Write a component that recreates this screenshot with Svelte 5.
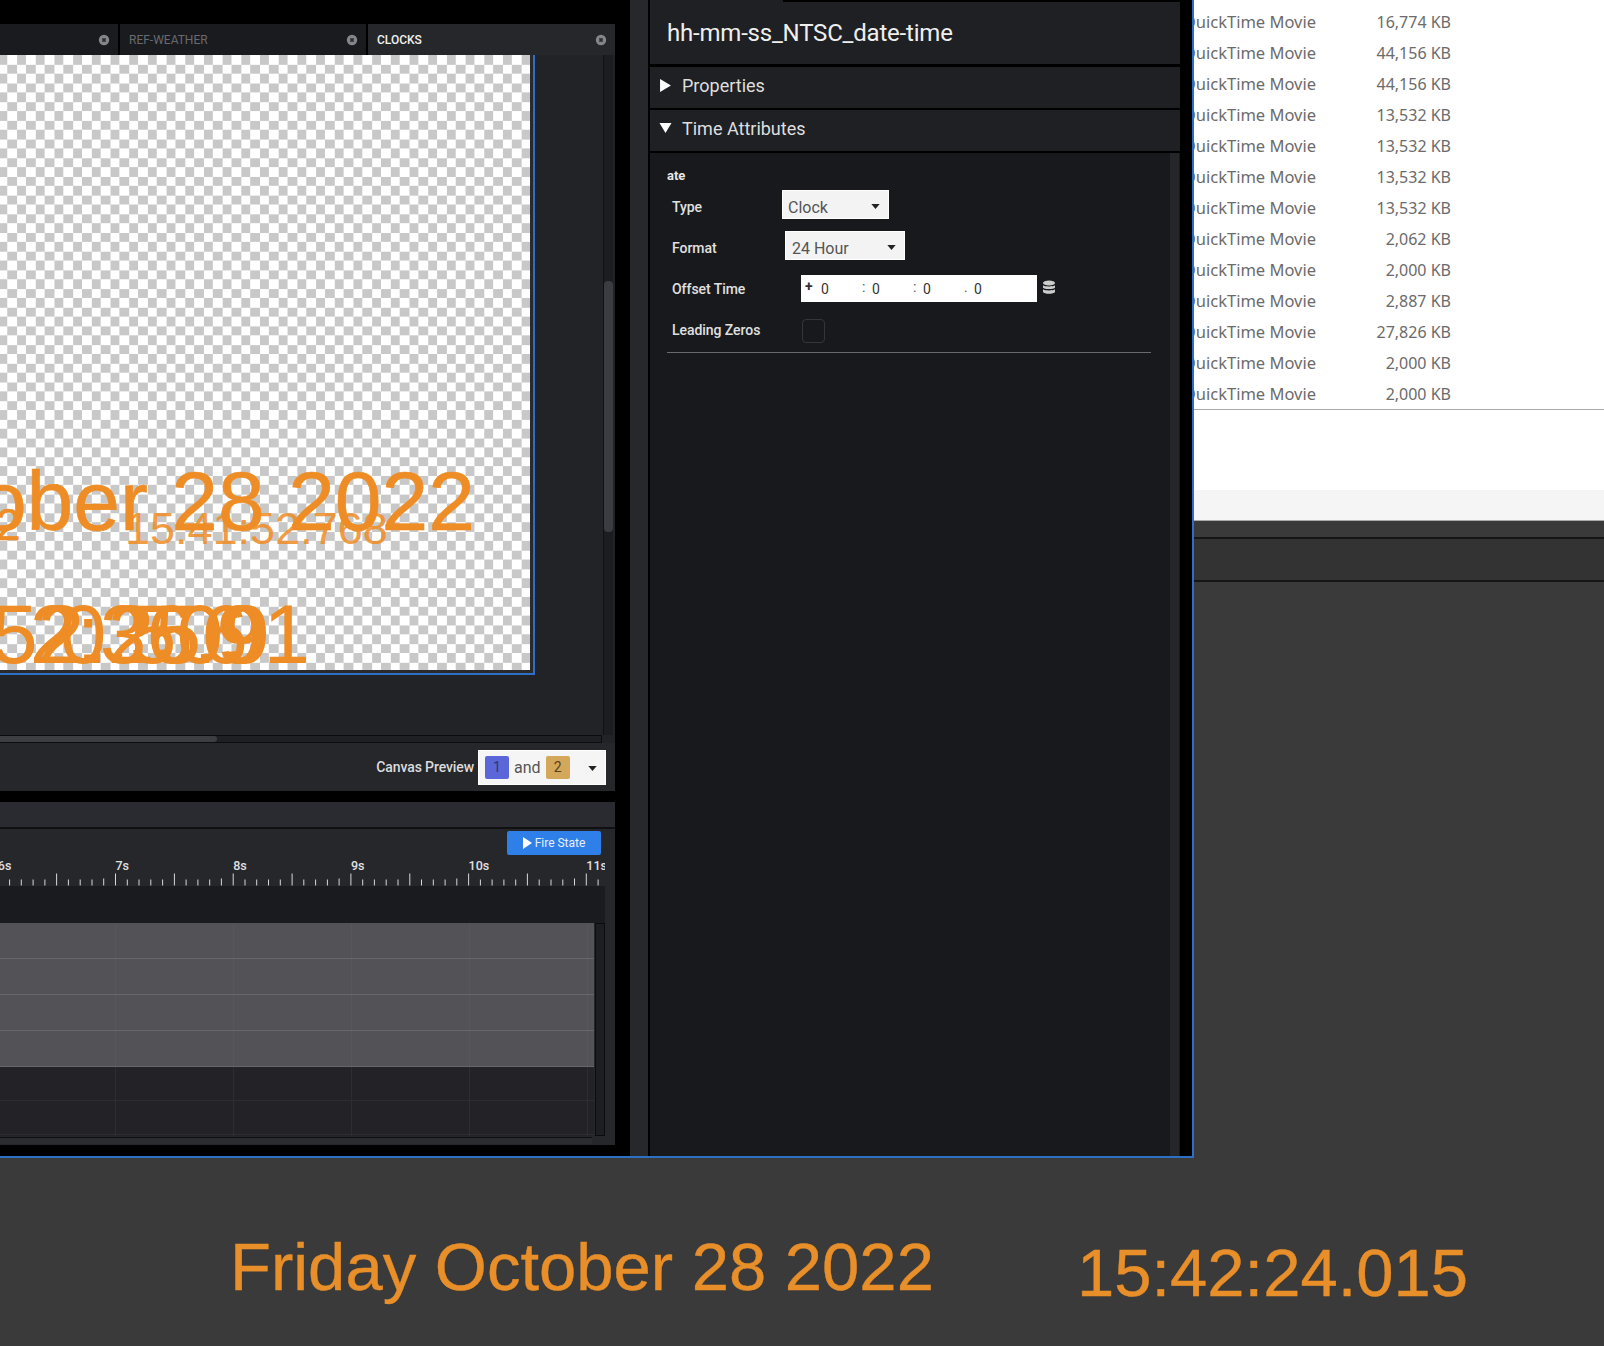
<script>
	const files = [
		'16,774 KB', '44,156 KB', '44,156 KB', '13,532 KB', '13,532 KB', '13,532 KB', '13,532 KB',
		'2,062 KB', '2,000 KB', '2,887 KB', '27,826 KB', '2,000 KB', '2,000 KB'
	];

	const secondWidth = 117.7;
	const ticks = [];
	for (let i = 0; i <= 52; i++) {
		const x = -2.2 + (i * secondWidth) / 10;
		let h = 6;
		if (i % 10 === 0 || i % 5 === 0) h = 12;
		else if (i % 10 === 9) h = 7;
		ticks.push({ x: x.toFixed(1), h });
	}
	const seconds = [6, 7, 8, 9, 10, 11];
</script>

<div class="screen">
	<div class="top">
		<div class="app">
			<div class="left">
				<div class="tabs">
					<div class="tab first">
						<svg class="close" viewBox="0 0 12 12"><circle cx="6" cy="6" r="5.2" fill="#85868a" /><path d="M4.4 4.4l3.2 3.2M7.6 4.4l-3.2 3.2" stroke="#2a2b2e" stroke-width="1.6" /></svg>
					</div>
					<div class="tab second">
						<span>REF-WEATHER</span>
						<svg class="close" viewBox="0 0 12 12"><circle cx="6" cy="6" r="5.2" fill="#85868a" /><path d="M4.4 4.4l3.2 3.2M7.6 4.4l-3.2 3.2" stroke="#2a2b2e" stroke-width="1.6" /></svg>
					</div>
					<div class="tab active">
						<span>CLOCKS</span>
						<svg class="close" viewBox="0 0 12 12"><circle cx="6" cy="6" r="5.2" fill="#85868a" /><path d="M4.4 4.4l3.2 3.2M7.6 4.4l-3.2 3.2" stroke="#2a2b2e" stroke-width="1.6" /></svg>
					</div>
				</div>

				<div class="viewer">
					<div class="viewport">
						<div class="stage">
							<div class="canvas">
								<span class="clip date">Friday October 28 2022</span>
								<span class="clip stray">2</span>
								<span class="clip small">15:41:52.768</span>
								<span class="clip big a">2:36.91</span>
								<span class="clip big b">52.256</span>
								<span class="clip big c">0.509</span>
							</div>
						</div>
						<div class="vscroll"><div class="vthumb"></div></div>
					</div>
					<div class="hscroll"><div class="hthumb"></div></div>
					<div class="preview">
						<span class="preview-label">Canvas Preview</span>
						<div class="preview-select">
							<span class="badge one">1</span>
							<span>and</span>
							<span class="badge two">2</span>
							<svg class="caret" viewBox="0 0 10 6"><path d="M0 0h10L5 6z" fill="#222" /></svg>
						</div>
					</div>
				</div>

				<div class="timeline">
					<div class="tl-head"></div>
					<div class="tl-tools">
						<button class="fire">
							<svg viewBox="0 0 9 12"><path d="M0 0l9 6-9 6z" fill="#fff" /></svg>
							Fire State
						</button>
					</div>
					<svg class="ruler" viewBox="0 0 605 28">
						{#each ticks as t}
							<line x1={t.x} x2={t.x} y1={27.5 - t.h} y2="27.5" stroke="#d8d8d8" stroke-width="1" />
						{/each}
						{#each seconds as s, i}
							<text x={-2.2 + i * secondWidth} y="12">{s}s</text>
						{/each}
					</svg>
					<div class="tl-gap"></div>
					<div class="tl-body">
						<div class="tracks">
							<div class="track"></div>
							<div class="track"></div>
							<div class="track"></div>
							<div class="track"></div>
							<div class="row"></div>
							<div class="row"></div>
						</div>
						<div class="tl-vscroll"></div>
					</div>
					<div class="tl-hscroll"></div>
				</div>
			</div>

			<div class="sidebar"></div>

			<div class="inspector">
				<div class="strip"></div>
				<div class="title">hh-mm-ss_NTSC_date-time</div>
				<div class="section">
					<svg class="tri" viewBox="0 0 10 12"><path d="M0 0l10 6-10 6z" fill="#fff" /></svg>
					Properties
				</div>
				<div class="section">
					<svg class="tri down" viewBox="0 0 12 10"><path d="M0 0h12L6 10z" fill="#fff" /></svg>
					Time Attributes
				</div>
				<div class="content">
					<div class="form">
						<div class="group">ate</div>
						<div class="field">
							<label>Type</label>
							<div class="select type">Clock<svg class="caret" viewBox="0 0 10 6"><path d="M0 0h10L5 6z" fill="#222" /></svg></div>
						</div>
						<div class="field">
							<label>Format</label>
							<div class="select format">24 Hour<svg class="caret" viewBox="0 0 10 6"><path d="M0 0h10L5 6z" fill="#222" /></svg></div>
						</div>
						<div class="field">
							<label>Offset Time</label>
							<div class="offset">
								<span class="plus">+</span>
								<span class="seg">0</span>
								<span class="sep">:</span>
								<span class="seg">0</span>
								<span class="sep">:</span>
								<span class="seg">0</span>
								<span class="sep">.</span>
								<span class="seg">0</span>
							</div>
							<svg class="db" viewBox="0 0 14 16">
								<ellipse cx="7" cy="3" rx="6" ry="2.6" fill="#ccc" />
								<path d="M1 5.2c1 1.6 11 1.6 12 0v2.6c-1 1.6-11 1.6-12 0zM1 9.2c1 1.6 11 1.6 12 0v2.8c-1 2.4-11 2.4-12 0z" fill="#ccc" />
							</svg>
						</div>
						<div class="field">
							<label>Leading Zeros</label>
							<div class="check"></div>
						</div>
						<div class="rule"></div>
					</div>
					<div class="form-scroll"></div>
				</div>
			</div>
		</div>

		<div class="explorer">
			<div class="list">
				{#each files as size}
					<div class="file">
						<div class="kind"><span>QuickTime Movie</span></div>
						<div class="size">{size}</div>
					</div>
				{/each}
			</div>
			<div class="blank"></div>
			<div class="status"></div>
			<div class="dark-a"></div>
			<div class="dark-b"></div>
			<div class="dark-c"></div>
		</div>
	</div>

	<div class="clock-bar">
		<span class="out-date">Friday October 28 2022</span>
		<span class="out-time">15:42:24.015</span>
	</div>
</div>

<style>
	:global(body) {
		margin: 0;
		background: #3a3a3a;
	}

	.screen {
		width: 1604px;
		height: 1346px;
		display: flex;
		flex-direction: column;
		overflow: hidden;
		font-family: Roboto, sans-serif;
		color: #e6e6e6;
	}

	.top {
		display: flex;
		height: 1158px;
	}

	.app {
		width: 1194px;
		box-sizing: border-box;
		display: flex;
		background: #000;
		border-right: 2px solid #2d6fc4;
		border-bottom: 2px solid #2d6fc4;
	}

	.left {
		width: 615px;
		flex-shrink: 0;
		padding-top: 24px;
		display: flex;
		flex-direction: column;
	}

	.tabs {
		display: flex;
		height: 31px;
		font-size: 12px;
		gap: 2px;
	}

	.tab {
		display: flex;
		align-items: center;
		justify-content: space-between;
		background: #1a1b1e;
		padding: 1px 8px 0 9px;
		box-sizing: border-box;
		color: #696a6f;
	}

	.first {
		width: 118px;
		justify-content: flex-end;
	}

	.second {
		width: 246px;
	}

	.active {
		width: 247px;
		background: #26272b;
		color: #f0f0f0;
		font-weight: 500;
	}

	.close {
		width: 12px;
		height: 12px;
	}

	.viewer {
		height: 736px;
		background: #222327;
		display: flex;
		flex-direction: column;
	}

	.viewport {
		height: 680px;
		display: flex;
		justify-content: space-between;
	}

	.stage {
		width: 535px;
		height: 620px;
		box-sizing: border-box;
		border-right: 2px solid #2d6fc4;
		border-bottom: 2px solid #2d6fc4;
		padding: 0 3px 3px 0;
		background: #2a2a2d;
	}

	.canvas {
		position: relative;
		height: 100%;
		overflow: hidden;
		background-color: #fff;
		background-image: conic-gradient(#c8c8c8 25%, #fff 0 50%, #c8c8c8 0 75%, #fff 0);
		background-size: 18.7px 18.7px;
		background-position: 7.25px 0;
	}

	.clip {
		position: absolute;
		font-family: 'Liberation Sans', Arial, sans-serif;
		line-height: 1;
		white-space: nowrap;
		color: #ee8d25;
		-webkit-text-stroke: 0.6px #ee8d25;
	}

	.date {
		right: 55px;
		top: 404px;
		font-size: 84px;
	}

	.stray {
		left: -4px;
		top: 448px;
		font-size: 44px;
	}

	.small {
		left: 125px;
		top: 451px;
		font-size: 45px;
		opacity: 0.85;
		-webkit-text-stroke: 0;
	}

	.big {
		top: 537px;
		font-size: 84px;
		-webkit-text-stroke: 0;
	}

	.a {
		right: 220px;
	}

	.b {
		right: 282px;
	}

	.c {
		right: 260px;
	}

	.vscroll {
		width: 10px;
		margin-right: 2px;
		background: #1c1d20;
		border-left: 1px solid #111;
		box-sizing: border-box;
		padding-top: 226px;
	}

	.vthumb {
		height: 251px;
		background: #3b3c41;
		border-radius: 4px;
	}

	.hscroll {
		height: 8px;
		width: 602px;
		background: #1f2023;
		box-sizing: border-box;
		border: 1px solid #0c0c0e;
		border-left: 0;
	}

	.hthumb {
		width: 217px;
		height: 100%;
		background: #3d3e42;
		border-radius: 0 4px 4px 0;
	}

	.preview {
		flex: 1;
		background: #26272b;
		display: flex;
		align-items: center;
		justify-content: flex-end;
		padding: 0 9px 0 0;
		gap: 4px;
	}

	.preview-label {
		font-size: 14px;
		font-weight: 500;
		color: #dcdcdc;
		letter-spacing: -0.1px;
		white-space: nowrap;
	}

	.preview-select {
		width: 128px;
		height: 35px;
		box-sizing: border-box;
		background: #f5f5f5;
		border: 1px solid #fff;
		display: flex;
		align-items: center;
		gap: 5px;
		padding-left: 6px;
		position: relative;
		color: #555;
		font-size: 16px;
	}

	.badge {
		width: 24px;
		height: 23px;
		border-radius: 2px;
		display: flex;
		align-items: center;
		justify-content: center;
		font-size: 14px;
	}

	.one {
		background: #5b67d8;
		color: #2d3570;
	}

	.two {
		background: #d4a85a;
		color: #554220;
	}

	.caret {
		position: absolute;
		width: 9px;
		height: 5px;
	}

	.preview-select .caret {
		right: 8px;
		top: 15px;
	}

	.timeline {
		margin-top: 11px;
		height: 343px;
		background: #26272b;
		display: flex;
		flex-direction: column;
	}

	.tl-head {
		height: 25px;
		background: #2a2b30;
		border-bottom: 2px solid #101012;
	}

	.tl-tools {
		height: 29px;
		display: flex;
		justify-content: flex-end;
		align-items: flex-start;
		padding: 2px 14px 0 0;
		box-sizing: border-box;
	}

	.fire {
		width: 94px;
		height: 24px;
		background: #2f7fe8;
		border: 0;
		border-radius: 2px;
		color: #e8f0fb;
		font-family: Roboto, sans-serif;
		font-size: 12px;
		padding: 0;
		display: flex;
		align-items: center;
		justify-content: center;
		gap: 3px;
	}

	.fire svg {
		width: 9px;
		height: 12px;
	}

	.ruler {
		width: 605px;
		height: 28px;
		display: block;
		flex-shrink: 0;
	}

	.ruler text {
		font-family: Roboto, sans-serif;
		font-size: 12.5px;
		font-weight: 500;
		fill: #e0e0e0;
	}

	.tl-gap {
		height: 37px;
		width: 605px;
		background: #1a1b1e;
	}

	.tl-body {
		display: flex;
		height: 213px;
		gap: 1px;
	}

	.tracks {
		width: 594px;
		display: flex;
		flex-direction: column;
		background-image: linear-gradient(to right, transparent 117px, rgba(255, 255, 255, 0.05) 117px);
		background-size: 118px 100%;
		background-position: -2px 0;
		background-color: #232327;
	}

	.track {
		height: 36px;
		box-sizing: border-box;
		background: rgba(102, 102, 107, 0.72);
		border-bottom: 1px solid #67676b;
	}

	.row {
		height: 34px;
		box-sizing: border-box;
		border-bottom: 1px solid #2d2d31;
		flex-shrink: 0;
	}

	.tl-vscroll {
		width: 10px;
		box-sizing: border-box;
		background: #1d1e21;
		border: 1px solid #0c0c0e;
	}

	.tl-hscroll {
		width: 592px;
		height: 7px;
		margin-top: 1px;
		background: #2b2c30;
		border-top: 1px solid #0e0e10;
		box-sizing: border-box;
	}

	.sidebar {
		width: 18px;
		margin-left: 15px;
		margin-right: 2px;
		background: #27282c;
		flex-shrink: 0;
	}

	.inspector {
		width: 530px;
		flex-shrink: 0;
		display: flex;
		flex-direction: column;
	}

	.strip {
		height: 2px;
		background: linear-gradient(to right, #1f2024 133px, #000 133px);
	}

	.title {
		height: 62px;
		background: #1f2024;
		display: flex;
		align-items: center;
		padding-left: 17px;
		font-size: 24px;
		color: #efefef;
		margin-bottom: 3px;
		letter-spacing: -0.2px;
	}

	.section {
		height: 41px;
		box-sizing: border-box;
		margin-bottom: 2px;
		background: #1f2024;
		display: flex;
		align-items: center;
		padding: 0 0 5px 10px;
		font-size: 18px;
		color: #dedede;
		gap: 11px;
	}

	.tri {
		width: 11px;
		height: 13px;
	}

	.tri.down {
		width: 13px;
		height: 10px;
		margin-left: -1px;
		margin-right: -1px;
	}

	.content {
		flex: 1;
		background: #18191c;
		display: flex;
		justify-content: space-between;
	}

	.form {
		padding: 15px 0 0 17px;
		width: 484px;
	}

	.form-scroll {
		width: 9px;
		margin-right: 1px;
		background: #25262a;
	}

	.group {
		font-size: 13px;
		font-weight: 700;
		height: 18px;
		line-height: 16px;
		color: #e8e8e8;
	}

	.field {
		height: 41px;
		display: flex;
		align-items: center;
		padding-left: 5px;
	}

	.field label {
		width: 110px;
		flex-shrink: 0;
		font-size: 14px;
		font-weight: 500;
		color: #e0e0e0;
		letter-spacing: -0.05px;
	}

	.select {
		position: relative;
		box-sizing: border-box;
		height: 29px;
		margin-top: -4px;
		background: #f3f3f3;
		border: 1px solid #fff;
		color: #555;
		font-size: 16px;
		padding: 7px 0 0 5px;
	}

	.select .caret {
		right: 8px;
		top: 13px;
	}

	.type {
		width: 107px;
	}

	.format {
		width: 120px;
		margin-left: 3px;
		padding-left: 6px;
	}

	.offset {
		margin-left: 19px;
		width: 236px;
		height: 27px;
		box-sizing: border-box;
		background: #fff;
		color: #333;
		font-size: 14px;
		display: flex;
		align-items: center;
		padding-left: 3px;
		position: relative;
	}

	.plus {
		width: 17px;
		font-weight: 700;
		font-size: 14px;
		margin-top: -5px;
		padding-left: 1px;
		box-sizing: border-box;
	}

	.seg {
		width: 41px;
		padding-top: 1px;
	}

	.sep {
		width: 10px;
		color: #555;
		margin-top: -3px;
	}

	.db {
		width: 14px;
		height: 16px;
		margin-left: 5px;
		margin-top: -2px;
	}

	.check {
		margin-left: 20px;
		width: 23px;
		height: 24px;
		box-sizing: border-box;
		border: 1px solid #34353a;
		border-radius: 4px;
		background: #18191c;
		margin-top: 2px;
	}

	.rule {
		margin-top: 2px;
		height: 1px;
		background: #6a6a6c;
	}

	.explorer {
		flex: 1;
		display: flex;
		flex-direction: column;
		background: #3a3a3a;
	}

	.list {
		background: #fff;
		padding-top: 7px;
		height: 410px;
		box-sizing: border-box;
		border-bottom: 1px solid #aaa;
		font-family: 'Noto Sans', sans-serif;
		font-size: 16px;
		color: #6b6b6b;
	}

	.file {
		display: flex;
		height: 31px;
		line-height: 31px;
	}

	.kind {
		width: 122px;
		display: flex;
		justify-content: flex-end;
		overflow: hidden;
		white-space: nowrap;
		flex-shrink: 0;
		font-size: 16.5px;
		line-height: 30px;
	}

	.size {
		width: 135px;
		text-align: right;
	}

	.blank {
		height: 80px;
		background: #fff;
	}

	.status {
		height: 31px;
		background: #f5f5f5;
		border-bottom: 1px solid #aaa;
		box-sizing: border-box;
	}

	.dark-a {
		height: 16px;
		background: #3a3a3a;
		border-bottom: 2px solid #151515;
	}

	.dark-b {
		height: 41px;
		background: #333;
		border-bottom: 2px solid #151515;
	}

	.dark-c {
		flex: 1;
		background: #3a3a3a;
	}

	.clock-bar {
		flex: 1;
		background: #3a3a3a;
		display: flex;
		align-items: flex-start;
		padding: 75px 0 0 230px;
		gap: 143px;
		font-family: 'Liberation Sans', Arial, sans-serif;
		font-size: 67px;
		line-height: 1;
		color: #e88f2a;
		-webkit-text-stroke: 0.4px #e88f2a;
		white-space: nowrap;
	}

	.out-time {
		margin-top: 6px;
	}
</style>
